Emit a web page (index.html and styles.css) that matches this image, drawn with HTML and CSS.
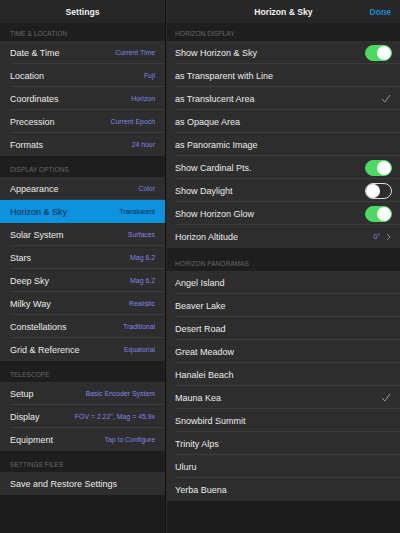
FILE: index.html
```html
<!DOCTYPE html>
<html lang="en">
<head>
  <meta charset="UTF-8">
  <meta name="viewport" content="width=device-width, initial-scale=1.0">
  <title>Settings</title>
  <link rel="stylesheet" href="styles.css">
</head>
<body>
<div class="split">
  <div class="panel master">
    <div class="nav-bar">
      <div class="nav-title">Settings</div>
    </div>

    <div class="section-head first">Time &amp; Location</div>
    <div class="group">
      <div class="row"><span class="label">Date &amp; Time</span><span class="value">Current Time</span></div>
      <div class="row"><span class="label">Location</span><span class="value">Fuji</span></div>
      <div class="row"><span class="label">Coordinates</span><span class="value">Horizon</span></div>
      <div class="row"><span class="label">Precession</span><span class="value">Current Epoch</span></div>
      <div class="row"><span class="label">Formats</span><span class="value">24 hour</span></div>
    </div>

    <div class="section-head">Display Options</div>
    <div class="group">
      <div class="row"><span class="label">Appearance</span><span class="value">Color</span></div>
      <div class="row selected"><span class="label">Horizon &amp; Sky</span><span class="value">Translucent</span></div>
      <div class="row"><span class="label">Solar System</span><span class="value">Surfaces</span></div>
      <div class="row"><span class="label">Stars</span><span class="value">Mag 6.2</span></div>
      <div class="row"><span class="label">Deep Sky</span><span class="value">Mag 6.2</span></div>
      <div class="row"><span class="label">Milky Way</span><span class="value">Realistic</span></div>
      <div class="row"><span class="label">Constellations</span><span class="value">Traditional</span></div>
      <div class="row"><span class="label">Grid &amp; Reference</span><span class="value">Equatorial</span></div>
    </div>

    <div class="section-head">Telescope</div>
    <div class="group">
      <div class="row"><span class="label">Setup</span><span class="value">Basic Encoder System</span></div>
      <div class="row"><span class="label">Display</span><span class="value">FOV = 2.22°, Mag = 45.9x</span></div>
      <div class="row"><span class="label">Equipment</span><span class="value">Tap to Configure</span></div>
    </div>

    <div class="section-head">Settings Files</div>
    <div class="group">
      <div class="row"><span class="label">Save and Restore Settings</span></div>
    </div>
  </div>

  <div class="panel detail">
    <div class="nav-bar">
      <div class="nav-title">Horizon &amp; Sky</div>
      <div class="nav-done">Done</div>
    </div>

    <div class="section-head first">Horizon Display</div>
    <div class="group">
      <div class="row"><span class="label">Show Horizon &amp; Sky</span><span class="toggle on"></span></div>
      <div class="row"><span class="label">as Transparent with Line</span></div>
      <div class="row"><span class="label">as Translucent Area</span>
        <svg class="check" width="10" height="9" viewBox="0 0 10 9"><polyline points="1,5 3.8,8 9,1" fill="none" stroke="#9a9a9a" stroke-width="1"/></svg>
      </div>
      <div class="row"><span class="label">as Opaque Area</span></div>
      <div class="row"><span class="label">as Panoramic Image</span></div>
      <div class="row"><span class="label">Show Cardinal Pts.</span><span class="toggle on"></span></div>
      <div class="row"><span class="label">Show Daylight</span><span class="toggle"></span></div>
      <div class="row"><span class="label">Show Horizon Glow</span><span class="toggle on"></span></div>
      <div class="row"><span class="label">Horizon Altitude</span>
        <span class="accessory"><span class="value">0°</span>
          <svg class="chevron" width="5" height="8" viewBox="0 0 5 8"><polyline points="1,1 4,4 1,7" fill="none" stroke="#8a8a8a" stroke-width="1"/></svg>
        </span>
      </div>
    </div>

    <div class="section-head tall">Horizon Panoramas</div>
    <div class="group">
      <div class="row"><span class="label">Angel Island</span></div>
      <div class="row"><span class="label">Beaver Lake</span></div>
      <div class="row"><span class="label">Desert Road</span></div>
      <div class="row"><span class="label">Great Meadow</span></div>
      <div class="row"><span class="label">Hanalei Beach</span></div>
      <div class="row"><span class="label">Mauna Kea</span>
        <svg class="check" width="10" height="9" viewBox="0 0 10 9"><polyline points="1,5 3.8,8 9,1" fill="none" stroke="#9a9a9a" stroke-width="1"/></svg>
      </div>
      <div class="row"><span class="label">Snowbird Summit</span></div>
      <div class="row"><span class="label">Trinity Alps</span></div>
      <div class="row"><span class="label">Uluru</span></div>
      <div class="row"><span class="label">Yerba Buena</span></div>
    </div>
  </div>
</div>
</body>
</html>
```

FILE: styles.css
```css
* {
  box-sizing: border-box;
  margin: 0;
  padding: 0;
}

body {
  background-color: #1b1b1b;
  font-family: 'Liberation Sans', Arial, sans-serif;
  color: #ececec;
  width: 400px;
  height: 533px;
  overflow: hidden;
}

.split {
  display: flex;
  height: 533px;
}

.panel {
  background-color: #1c1c1c;
  height: 100%;
}

.master {
  width: 166px;
  border-right: 1px solid #121212;
}

.detail {
  flex: 1;
  border-left: 1px solid #2a2a2a;
}

.nav-bar {
  position: relative;
  height: 23px;
  background-color: #272727;
  display: flex;
  align-items: center;
  justify-content: center;
}

.nav-title {
  font-size: 8.6px;
  font-weight: bold;
  color: #f2f2f2;
}

.nav-done {
  position: absolute;
  right: 9px;
  top: 7px;
  font-size: 8.6px;
  font-weight: bold;
  color: #1a8ad8;
}

.section-head {
  height: 21px;
  display: flex;
  align-items: flex-end;
  padding: 0 10px 4px;
  font-size: 6.6px;
  text-transform: uppercase;
  color: #686868;
  background-color: #1e1e1e;
}

.section-head.first {
  height: 18px;
}

.section-head.tall {
  height: 23px;
}

.detail .section-head {
  padding-left: 8px;
}

.group {
  background-color: #2e2e2e;
}

.row {
  height: 23px;
  display: flex;
  align-items: center;
  justify-content: space-between;
  padding: 0 10px;
  font-size: 9px;
  background-image: linear-gradient(#3c3c3c, #3c3c3c);
  background-size: calc(100% - 10px) 1px;
  background-position: right bottom;
  background-repeat: no-repeat;
}

.detail .row {
  padding: 0 8px;
  background-size: calc(100% - 8px) 1px;
}

.row:last-child {
  background-image: none;
}

.row.selected {
  background-color: #0d92de;
  background-image: none;
  color: #0c2746;
}

.value {
  font-size: 6.9px;
  color: #8383e2;
}

.row.selected .value {
  color: #0c2746;
}

.accessory {
  display: flex;
  align-items: center;
  gap: 6px;
  padding-right: 1px;
}

.toggle {
  position: relative;
  width: 27px;
  height: 16px;
  border-radius: 8px;
  border: 1px solid #dcdcdc;
  background-color: #2e2e2e;
}

.toggle::after {
  content: '';
  position: absolute;
  top: 0;
  left: 0;
  width: 14px;
  height: 14px;
  border-radius: 50%;
  background-color: #ffffff;
}

.toggle.on {
  background-color: #4cd964;
  border-color: #4cd964;
}

.toggle.on::after {
  left: 11px;
}

.check {
  margin-right: 1px;
}
```
